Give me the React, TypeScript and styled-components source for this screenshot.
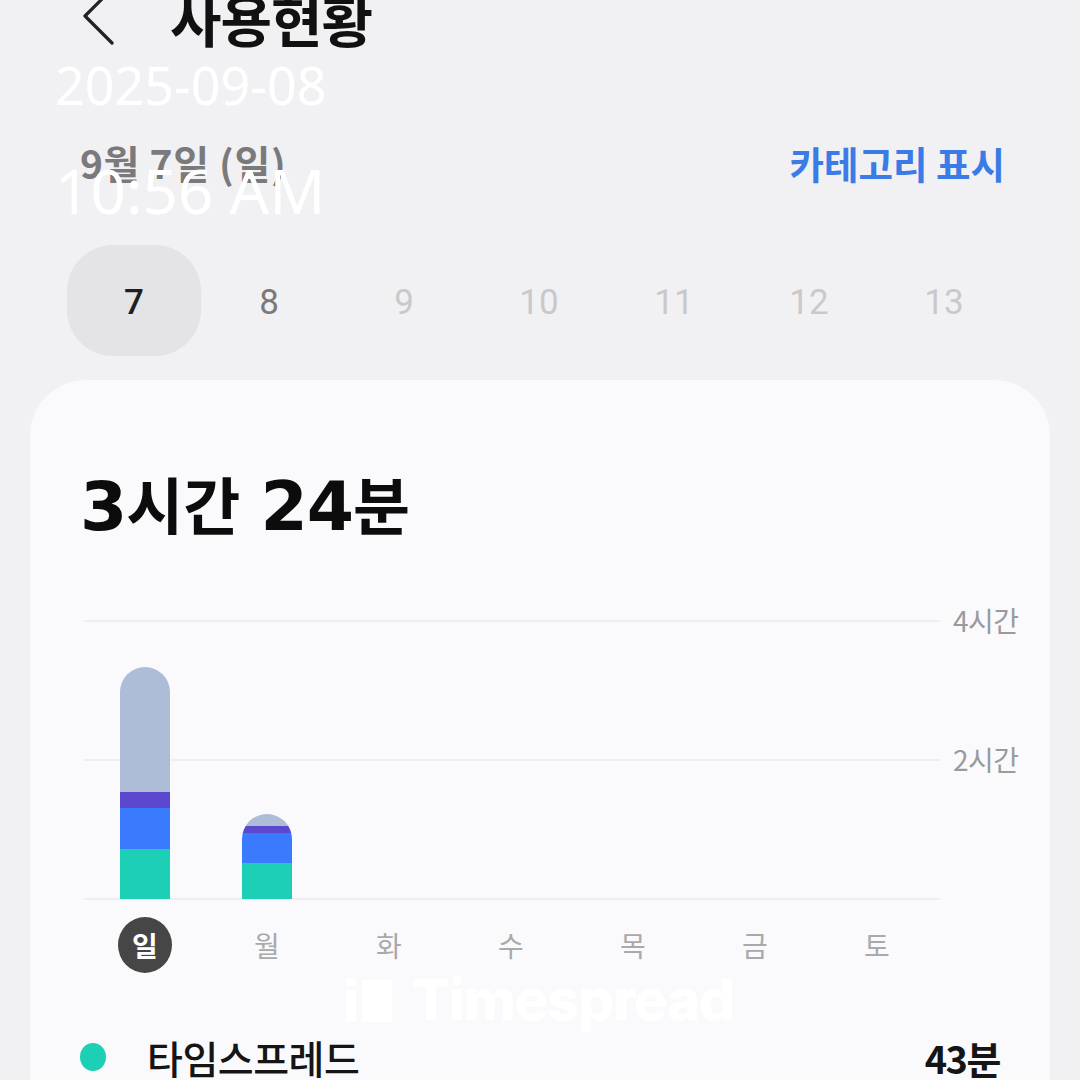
import React from "react";
import styled, { createGlobalStyle } from "styled-components";

const Global = createGlobalStyle`
  html, body { margin: 0; padding: 0; background: #f1f1f3; }
  body { font-family: "Noto Sans CJK KR", "Noto Sans", sans-serif; overflow: hidden; }
`;

const Page = styled.div`
  position: relative;
  width: 1080px;
  height: 1080px;
  overflow: hidden;
  background: #f1f1f3;
`;

const Header = styled.div`
  display: flex;
  align-items: center;
  gap: 54px;
  height: 60px;
  margin-top: -12px;
  padding-left: 82px;
`;

const Title = styled.h1`
  margin: 0;
  font-size: 56px;
  font-weight: 700;
  color: #111;
  line-height: 60px;
  letter-spacing: -1px;
`;

const DateRow = styled.div`
  display: flex;
  justify-content: space-between;
  align-items: center;
  padding: 0 75px 0 80px;
  margin-top: 89px;
  height: 50px;
`;

const DateText = styled.span`
  font-size: 39px;
  font-weight: 700;
  color: #7a7a7c;
  letter-spacing: 0.6px;
`;

const CategoryLink = styled.span`
  font-size: 37.5px;
  font-weight: 700;
  color: #3a7be6;
  letter-spacing: 0;
`;

const DayPicker = styled.div`
  display: grid;
  grid-template-columns: repeat(7, 135px);
  padding-left: 67px;
  margin-top: 58px;
  height: 111px;
`;

const DayChip = styled.div<{ $tone: "sel" | "mid" | "off" }>`
  display: flex;
  align-items: center;
  justify-content: center;
  width: 134px;
  height: 111px;
  padding-top: 3px;
  box-sizing: border-box;
  border-radius: 46px;
  background: ${(p) => (p.$tone === "sel" ? "#e4e4e6" : "transparent")};
  font-family: Roboto, "Noto Sans", sans-serif;
  font-size: 35px;
  font-weight: ${(p) => (p.$tone === "sel" ? 500 : 400)};
  color: ${(p) =>
    p.$tone === "sel" ? "#1f1f1f" : p.$tone === "mid" ? "#7a7a7a" : "#c9c9cb"};
`;

const Card = styled.div`
  margin: 24px 30px 0;
  background: #fafafc;
  border-radius: 56px;
  padding: 83px 50px 40px 50px;
  height: 800px;
`;

const Total = styled.div`
  height: 80px;
  line-height: 80px;
  color: #0c0c0c;
  font-weight: 700;
  white-space: nowrap;
`;

const TotalNum = styled.span`
  font-family: "DejaVu Sans", Inter, sans-serif;
  font-size: 68px;
  font-weight: 700;
  letter-spacing: -1px;
`;

const TotalUnit = styled.span<{ $gap?: number }>`
  font-size: 62px;
  letter-spacing: 0;
  margin-right: ${(p) => p.$gap ?? 0}px;
`;

const ChartWrap = styled.div`
  display: grid;
  grid-template-columns: 856px 1fr;
  margin-top: 77px;
  margin-left: 4px;
`;

const Plot = styled.div`
  position: relative;
  height: 279px;
  display: grid;
  grid-template-columns: repeat(7, 122px);
  align-items: end;
`;

const GridLine = styled.div<{ $top: number }>`
  position: absolute;
  left: 0;
  right: 0;
  top: ${(p) => p.$top}px;
  height: 2px;
  background: #efeff2;
`;

const BarSlot = styled.div`
  position: relative;
  z-index: 1;
  display: flex;
  justify-content: center;
  height: 100%;
  align-items: flex-end;
`;

const Bar = styled.div`
  width: 50px;
  display: flex;
  flex-direction: column;
  border-radius: 25px 25px 0 0;
  overflow: hidden;
`;

const Segment = styled.div<{ $color: string }>`
  background: ${(p) => p.$color};
`;

const Axis = styled.div`
  position: relative;
  height: 279px;
`;

const AxisLabel = styled.span<{ $top: number }>`
  position: absolute;
  left: 13px;
  top: ${(p) => p.$top}px;
  transform: translateY(-50%);
  font-size: 28px;
  color: #9a9a9c;
  letter-spacing: -0.5px;
  white-space: nowrap;
`;

const WeekRow = styled.div`
  display: grid;
  grid-template-columns: repeat(7, 122px);
  margin-left: 4px;
  margin-top: 18px;
  height: 54px;
`;

const WeekDay = styled.div<{ $active?: boolean }>`
  justify-self: center;
  display: flex;
  align-items: center;
  justify-content: center;
  width: 54px;
  height: 56px;
  border-radius: 50%;
  background: ${(p) => (p.$active ? "#464646" : "transparent")};
  color: ${(p) => (p.$active ? "#fff" : "#a9a9ab")};
  font-size: 28px;
  font-weight: ${(p) => (p.$active ? 700 : 400)};
`;

const Watermark = styled.div`
  display: flex;
  align-items: center;
  justify-content: center;
  gap: 20px;
  margin-top: 7px;
  height: 44px;
  line-height: 44px;
  color: #ffffff;
  font-family: Inter, "Noto Sans", sans-serif;
  font-size: 56px;
  font-weight: 800;
  letter-spacing: -1px;
`;

const LegendRow = styled.div`
  display: flex;
  align-items: center;
  margin-top: 10px;
  height: 50px;
`;

const Dot = styled.span<{ $color: string }>`
  width: 26px;
  height: 28px;
  border-radius: 50%;
  background: ${(p) => p.$color};
  margin-right: 41px;
`;

const LegendName = styled.span`
  flex: 1;
  font-size: 39px;
  font-weight: 500;
  color: #151515;
  letter-spacing: -0.5px;
`;

const LegendValue = styled.span`
  font-size: 38px;
  font-weight: 700;
  color: #151515;
  letter-spacing: -1.5px;
`;

const Stamp = styled.div`
  position: absolute;
  left: 55px;
  color: #ffffff;
  font-family: "Noto Sans", Roboto, sans-serif;
  font-weight: 400;
  line-height: 1;
`;

const DateStamp = styled(Stamp)`
  top: 59px;
  font-size: 52px;
`;

const TimeStamp = styled(Stamp)`
  top: 159px;
  font-size: 62px;
`;

const Back = () => (
  <svg width="34" height="64" viewBox="0 0 34 64">
    <path d="M30 3 L3 30 L30 57" fill="none" stroke="#222" strokeWidth="3.2" strokeLinecap="round" strokeLinejoin="round" />
  </svg>
);

const Logo = () => (
  <svg width="46" height="44" viewBox="0 0 46 44">
    <rect x="0" y="0" width="10" height="9" rx="4" fill="#fff" />
    <rect x="0" y="12" width="10" height="32" fill="#fff" />
    <rect x="16" y="2" width="30" height="42" fill="#fff" />
  </svg>
);

const COLORS = { teal: "#1dcfb5", blue: "#3a7afc", purple: "#5b48cf", gray: "#adbdd7" };

const bars: { gray: number; purple: number; blue: number; teal: number }[] = [
  { gray: 125, purple: 16, blue: 41, teal: 50 },
  { gray: 12, purple: 7, blue: 30, teal: 36 },
];

const days = ["7", "8", "9", "10", "11", "12", "13"];
const week = ["일", "월", "화", "수", "목", "금", "토"];

export default function App() {
  return (
    <Page>
      <Global />
      <Header>
        <Back />
        <Title>사용현황</Title>
      </Header>
      <DateRow>
        <DateText>9월 7일 (일)</DateText>
        <CategoryLink>카테고리 표시</CategoryLink>
      </DateRow>
      <DayPicker>
        {days.map((d, i) => (
          <DayChip key={d} $tone={i === 0 ? "sel" : i === 1 ? "mid" : "off"}>
            {d}
          </DayChip>
        ))}
      </DayPicker>
      <Card>
        <Total>
          <TotalNum>3</TotalNum>
          <TotalUnit $gap={20}>시간</TotalUnit>
          <TotalNum>24</TotalNum>
          <TotalUnit>분</TotalUnit>
        </Total>
        <ChartWrap>
          <Plot>
            <GridLine $top={0} />
            <GridLine $top={139} />
            <GridLine $top={278} />
            {week.map((w, i) => (
              <BarSlot key={w}>
                {bars[i] && (
                  <Bar>
                    <Segment $color={COLORS.gray} style={{ height: bars[i].gray }} />
                    <Segment $color={COLORS.purple} style={{ height: bars[i].purple }} />
                    <Segment $color={COLORS.blue} style={{ height: bars[i].blue }} />
                    <Segment $color={COLORS.teal} style={{ height: bars[i].teal }} />
                  </Bar>
                )}
              </BarSlot>
            ))}
          </Plot>
          <Axis>
            <AxisLabel $top={0}>4시간</AxisLabel>
            <AxisLabel $top={139}>2시간</AxisLabel>
          </Axis>
        </ChartWrap>
        <WeekRow>
          {week.map((w, i) => (
            <WeekDay key={w} $active={i === 0}>
              {w}
            </WeekDay>
          ))}
        </WeekRow>
        <Watermark>
          <Logo />
          <span>Timespread</span>
        </Watermark>
        <LegendRow>
          <Dot $color={COLORS.teal} />
          <LegendName>타임스프레드</LegendName>
          <LegendValue>43분</LegendValue>
        </LegendRow>
      </Card>
      <DateStamp>2025-09-08</DateStamp>
      <TimeStamp>10:56 AM</TimeStamp>
    </Page>
  );
}
